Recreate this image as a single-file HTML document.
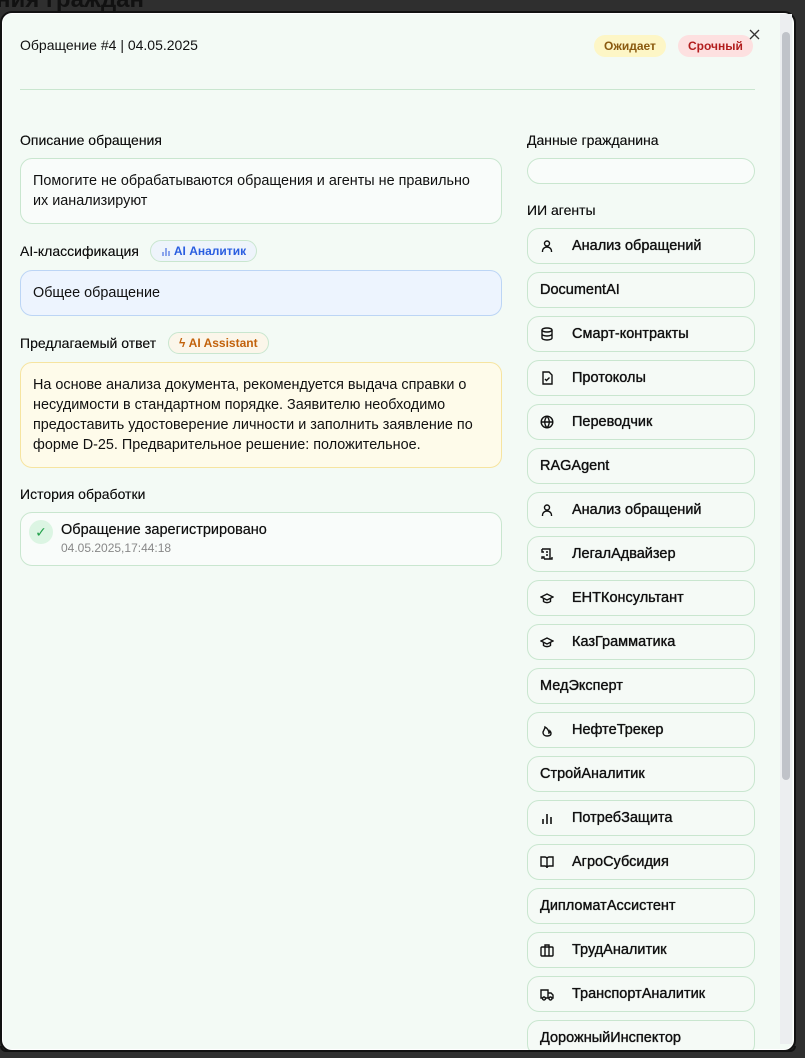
<!DOCTYPE html>
<html><head><meta charset="utf-8"><style>
*{box-sizing:border-box;margin:0;padding:0}
body{width:805px;height:1058px;background:#2f2f2f;overflow:hidden;font-family:"Liberation Sans","DejaVu Sans",sans-serif;color:#111;position:relative}
.bgt{position:absolute;left:-4px;top:-14px;font-size:24px;color:#111;font-weight:bold}
.modal{position:absolute;left:0;top:11px;width:796px;height:1041px;background:#f3faf5;border:2px solid #111;border-radius:12px;box-shadow:inset 0 0 0 1px #fff;overflow:hidden}
.sb{position:absolute;left:780px;top:14px;width:12px;height:1030px;background:#eceef0}
.th{position:absolute;left:782px;top:32px;width:8px;height:748px;background:#c0c3c9;border-radius:4px}
.a{position:absolute}
.title{left:20px;top:37px;font-size:14px}
.badge{top:35px;height:22px;border-radius:11px;font-size:12px;font-weight:bold;line-height:22px;padding:0 10px}
.hr{left:20px;top:89px;width:735px;height:1px;background:#c9e6cf}
.h{font-size:14px;text-shadow:0 0 0.3px #111}
.box{left:20px;width:482px;border:1px solid #c9e6cf;border-radius:12px;background:#f9fcfa;font-size:14.4px;line-height:20px;padding:12px 12px}
.pill{height:22px;border-radius:11px;font-size:12px;font-weight:bold;line-height:20px;padding:0 10px;border:1px solid #c9e6cf}
.ag{left:527px;width:228px;height:36px;border:1px solid #c9e6cf;border-radius:12px;background:#f5faf6;font-size:14.5px;line-height:34px;padding-left:12px;text-shadow:0 0 0.5px #111,0 0 0.5px #111}
.ag.i{padding-left:44px}
.ag svg{position:absolute;left:12px;top:10px}
</style></head><body>
<div class="bgt">ния граждан</div>
<div class="modal"></div>
<div class="sb"></div><div class="th"></div>
<div class="a title">Обращение #4 | 04.05.2025</div>
<div class="a badge" style="left:594px;background:#fdf6c6;color:#8a5a0f">Ожидает</div>
<div class="a badge" style="left:678px;background:#fde0e0;color:#b21e1e">Срочный</div>
<svg class="a" style="left:749px;top:29px" width="11" height="11" viewBox="0 0 11 11" stroke="#333" stroke-width="1.3"><path d="M1 1l9 9M10 1l-9 9"/></svg>
<div class="a hr"></div>

<div class="a h" style="left:20px;top:132px">Описание обращения</div>
<div class="a box" style="top:158px;height:66px;padding-right:22px">Помогите не обрабатываются обращения и агенты не правильно их ианализируют</div>
<div class="a h" style="left:20px;top:243px">AI-классификация</div>
<div class="a pill" style="left:150px;top:240px;color:#2a5ee0;background:#eef4fb">
<svg width="10" height="10" viewBox="0 0 10 10" stroke="#6a8ae8" stroke-width="1.5" style="vertical-align:-1px"><path d="M2 10V6M5 10V2M8 10V5"/></svg> AI Аналитик</div>
<div class="a box" style="top:270px;height:46px;background:#edf4fe;border-color:#bcd5f5">Общее обращение</div>
<div class="a h" style="left:20px;top:335px">Предлагаемый ответ</div>
<div class="a pill" style="left:168px;top:332px;color:#c2620c;background:#fbf6ea">ϟ AI Assistant</div>
<div class="a box" style="top:362px;height:106px;background:#fefbea;border-color:#f6e4a0">На основе анализа документа, рекомендуется выдача справки о несудимости в стандартном порядке. Заявителю необходимо предоставить удостоверение личности и заполнить заявление по форме D-25. Предварительное решение: положительное.</div>
<div class="a h" style="left:20px;top:486px">История обработки</div>
<div class="a box" style="top:512px;height:54px"></div>
<div class="a" style="left:29px;top:520px;width:24px;height:24px;border-radius:12px;background:#dcf5e3;color:#22a04a;font-size:14px;text-align:center;line-height:24px">✓</div>
<div class="a" style="left:61px;top:522px;font-size:14.5px;text-shadow:0 0 0.4px #111">Обращение зарегистрировано</div>
<div class="a" style="left:61px;top:541px;font-size:12px;color:#888">04.05.2025,17:44:18</div>

<div class="a h" style="left:527px;top:132px">Данные гражданина</div>
<div class="a" style="left:527px;top:158px;width:228px;height:26px;border:1px solid #c9e6cf;border-radius:13px;background:#f9fcfa"></div>
<div class="a h" style="left:527px;top:202px">ИИ агенты</div>

<div class="a ag i" style="top:228px"><svg width="14" height="14" viewBox="0 0 14 14" fill="none" stroke="#111" stroke-width="1.4"><circle cx="7" cy="4.5" r="2.5"/><path d="M2.5 13v-1a4.5 4 0 0 1 9 0v1"/></svg>Анализ обращений</div>
<div class="a ag" style="top:272px">DocumentAI</div>
<div class="a ag i" style="top:316px"><svg width="14" height="14" viewBox="0 0 14 14" fill="none" stroke="#111" stroke-width="1.4"><ellipse cx="7" cy="3" rx="5" ry="2"/><path d="M2 3v8c0 1 2 2 5 2s5-1 5-2V3M2 7c0 1 2 2 5 2s5-1 5-2"/></svg>Смарт-контракты</div>
<div class="a ag i" style="top:360px"><svg width="14" height="14" viewBox="0 0 14 14" fill="none" stroke="#111" stroke-width="1.4"><path d="M3 1h6l3 3v9H3z"/><path d="M5 8l1.5 1.5L9.5 6.5"/></svg>Протоколы</div>
<div class="a ag i" style="top:404px"><svg width="14" height="14" viewBox="0 0 14 14" fill="none" stroke="#111" stroke-width="1.4"><circle cx="7" cy="7" r="5.8"/><path d="M1.2 7h11.6M7 1.2c-3 3.5-3 8 0 11.6M7 1.2c3 3.5 3 8 0 11.6"/></svg>Переводчик</div>
<div class="a ag" style="top:448px">RAGAgent</div>
<div class="a ag i" style="top:492px"><svg width="14" height="14" viewBox="0 0 14 14" fill="none" stroke="#111" stroke-width="1.4"><circle cx="7" cy="4.5" r="2.5"/><path d="M2.5 13v-1a4.5 4 0 0 1 9 0v1"/></svg>Анализ обращений</div>
<div class="a ag i" style="top:536px"><svg width="14" height="14" viewBox="0 0 14 14" fill="none" stroke="#111" stroke-width="1.4"><path d="M2 2h8v10H4M2 2v3h2M4 12v-2H2v2M6 5h2M6 8h2M10 12h2v-2"/></svg>ЛегалАдвайзер</div>
<div class="a ag i" style="top:580px"><svg width="14" height="14" viewBox="0 0 14 14" fill="none" stroke="#111" stroke-width="1.4"><path d="M1 6l6-3 6 3-6 3z"/><path d="M3.5 7.5v3c2 1.5 5 1.5 7 0v-3"/></svg>ЕНТКонсультант</div>
<div class="a ag i" style="top:624px"><svg width="14" height="14" viewBox="0 0 14 14" fill="none" stroke="#111" stroke-width="1.4"><path d="M1 6l6-3 6 3-6 3z"/><path d="M3.5 7.5v3c2 1.5 5 1.5 7 0v-3"/></svg>КазГрамматика</div>
<div class="a ag" style="top:668px">МедЭксперт</div>
<div class="a ag i" style="top:712px"><svg width="14" height="14" viewBox="0 0 14 14" fill="none" stroke="#111" stroke-width="1.4"><path d="M7 13c-2.5 0-4-1.5-4-3.5 0-2 2-3 2-5.5 2 1 4 3.5 4 6 1-.5 1-1.5 1-2 1 1 1 2 1 2.5C11 12 9.5 13 7 13z"/></svg>НефтеТрекер</div>
<div class="a ag" style="top:756px">СтройАналитик</div>
<div class="a ag i" style="top:800px"><svg width="14" height="14" viewBox="0 0 14 14" fill="none" stroke="#111" stroke-width="1.6"><path d="M3 13V8M7 13V3M11 13V6"/></svg>ПотребЗащита</div>
<div class="a ag i" style="top:844px"><svg width="14" height="14" viewBox="0 0 14 14" fill="none" stroke="#111" stroke-width="1.4"><path d="M1 2h4a2 2 0 0 1 2 2v9a2 2 0 0 0-2-2H1zM13 2H9a2 2 0 0 0-2 2v9a2 2 0 0 1 2-2h4z"/></svg>АгроСубсидия</div>
<div class="a ag" style="top:888px">ДипломатАссистент</div>
<div class="a ag i" style="top:932px"><svg width="14" height="14" viewBox="0 0 14 14" fill="none" stroke="#111" stroke-width="1.4"><rect x="1" y="4" width="12" height="9" rx="1"/><path d="M5 4V2h4v2M5 4v9M9 4v9"/></svg>ТрудАналитик</div>
<div class="a ag i" style="top:976px"><svg width="14" height="14" viewBox="0 0 14 14" fill="none" stroke="#111" stroke-width="1.4"><path d="M1 3h7v8H1zM8 6h3l2 2v3H8"/><circle cx="4" cy="11.5" r="1.5" fill="#f5faf6"/><circle cx="10.5" cy="11.5" r="1.5" fill="#f5faf6"/></svg>ТранспортАналитик</div>
<div class="a ag" style="top:1020px">ДорожныйИнспектор</div>
<div class="a" style="left:0;top:1050px;width:805px;height:8px;background:#2f2f2f"></div>
<div class="a" style="left:0;top:1046px;width:796px;height:6px;border:2px solid #111;border-top:none;border-radius:0 0 12px 12px"></div>
</body></html>
